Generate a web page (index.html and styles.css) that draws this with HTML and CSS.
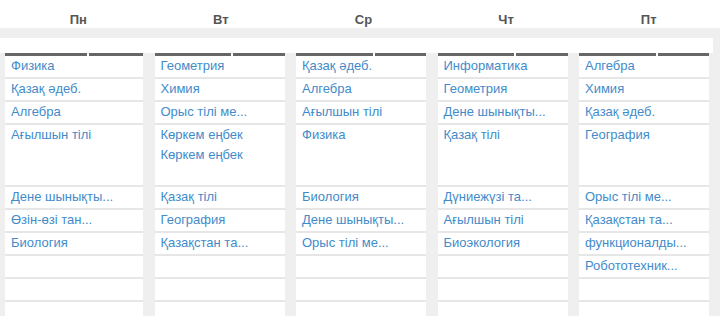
FILE: index.html
```html
<!DOCTYPE html>
<html lang="kk">
<head>
<meta charset="utf-8">
<title>Сабақ кестесі</title>
<link rel="stylesheet" href="styles.css">
</head>
<body>
<div class="days">
  <div class="day">Пн</div>
  <div class="day">Вт</div>
  <div class="day">Ср</div>
  <div class="day">Чт</div>
  <div class="day">Пт</div>
</div>
<div class="band"></div>
<div class="subhead"></div>
<div class="grid">
  <div class="top wide"><span class="seg a"></span><span class="seg b"></span></div>
  <div class="top"><span class="seg a"></span><span class="seg b"></span></div>
  <div class="top"><span class="seg a"></span><span class="seg b"></span></div>
  <div class="top"><span class="seg a"></span><span class="seg b"></span></div>
  <div class="top"><span class="seg a"></span><span class="seg b"></span></div>

  <div class="cell"><a>Физика</a></div>
  <div class="cell"><a>Геометрия</a></div>
  <div class="cell"><a>Қазақ әдеб.</a></div>
  <div class="cell"><a>Информатика</a></div>
  <div class="cell"><a>Алгебра</a></div>

  <div class="cell"><a>Қазақ әдеб.</a></div>
  <div class="cell"><a>Химия</a></div>
  <div class="cell"><a>Алгебра</a></div>
  <div class="cell"><a>Геометрия</a></div>
  <div class="cell"><a>Химия</a></div>

  <div class="cell"><a>Алгебра</a></div>
  <div class="cell"><a>Орыс тілі ме...</a></div>
  <div class="cell"><a>Ағылшын тілі</a></div>
  <div class="cell"><a>Дене шынықты...</a></div>
  <div class="cell"><a>Қазақ әдеб.</a></div>

  <div class="cell tall"><a>Ағылшын тілі</a></div>
  <div class="cell tall"><a>Көркем еңбек</a><a>Көркем еңбек</a></div>
  <div class="cell tall"><a>Физика</a></div>
  <div class="cell tall"><a>Қазақ тілі</a></div>
  <div class="cell tall"><a>География</a></div>

  <div class="cell"><a>Дене шынықты...</a></div>
  <div class="cell"><a>Қазақ тілі</a></div>
  <div class="cell"><a>Биология</a></div>
  <div class="cell"><a>Дүниежүзі та...</a></div>
  <div class="cell"><a>Орыс тілі ме...</a></div>

  <div class="cell"><a>Өзін-өзі тан...</a></div>
  <div class="cell"><a>География</a></div>
  <div class="cell"><a>Дене шынықты...</a></div>
  <div class="cell"><a>Ағылшын тілі</a></div>
  <div class="cell"><a>Қазақстан та...</a></div>

  <div class="cell"><a>Биология</a></div>
  <div class="cell"><a>Қазақстан та...</a></div>
  <div class="cell"><a>Орыс тілі ме...</a></div>
  <div class="cell"><a>Биоэкология</a></div>
  <div class="cell"><a>функционалды...</a></div>

  <div class="cell"></div>
  <div class="cell"></div>
  <div class="cell"></div>
  <div class="cell"></div>
  <div class="cell"><a>Робототехник...</a></div>

  <div class="cell"></div>
  <div class="cell"></div>
  <div class="cell"></div>
  <div class="cell"></div>
  <div class="cell"></div>

  <div class="cell"></div>
  <div class="cell"></div>
  <div class="cell"></div>
  <div class="cell"></div>
  <div class="cell"></div>
</div>
</body>
</html>
```

FILE: styles.css
```css
html, body {
  margin: 0;
  padding: 0;
}
body {
  background: #efefef;
  font-family: "Liberation Sans", Arial, sans-serif;
  font-size: 13px;
  overflow: hidden;
}
.days {
  display: grid;
  grid-template-columns: repeat(5, 1fr);
  background: #fff;
  padding: 12px 0 0 7px;
  height: 16px;
}
.day {
  text-align: center;
  font-weight: bold;
  color: #555;
  line-height: 16px;
}
.band {
  height: 10px;
}
.subhead {
  width: 713px;
  height: 15px;
  background: #fff;
}
.grid {
  display: grid;
  grid-template-columns: 138px 130px 130px 130px 130px;
  column-gap: 11.5px;
  padding-left: 5px;
}
.top {
  display: flex;
  gap: 2px;
  height: 3px;
  background: #fff;
}
.seg {
  background: #666;
  height: 3px;
}
.seg.a { flex: 3; }
.seg.b { flex: 2; }
.cell {
  background: #fff;
  border-bottom: 2px solid #e6e6e6;
  padding: 0 6px 1px;
  min-height: 20px;
  display: flex;
  flex-direction: column;
}
.cell.tall {
  min-height: 59px;
}
.cell a {
  display: block;
  color: #428bca;
  line-height: 20px;
  white-space: nowrap;
}
```
